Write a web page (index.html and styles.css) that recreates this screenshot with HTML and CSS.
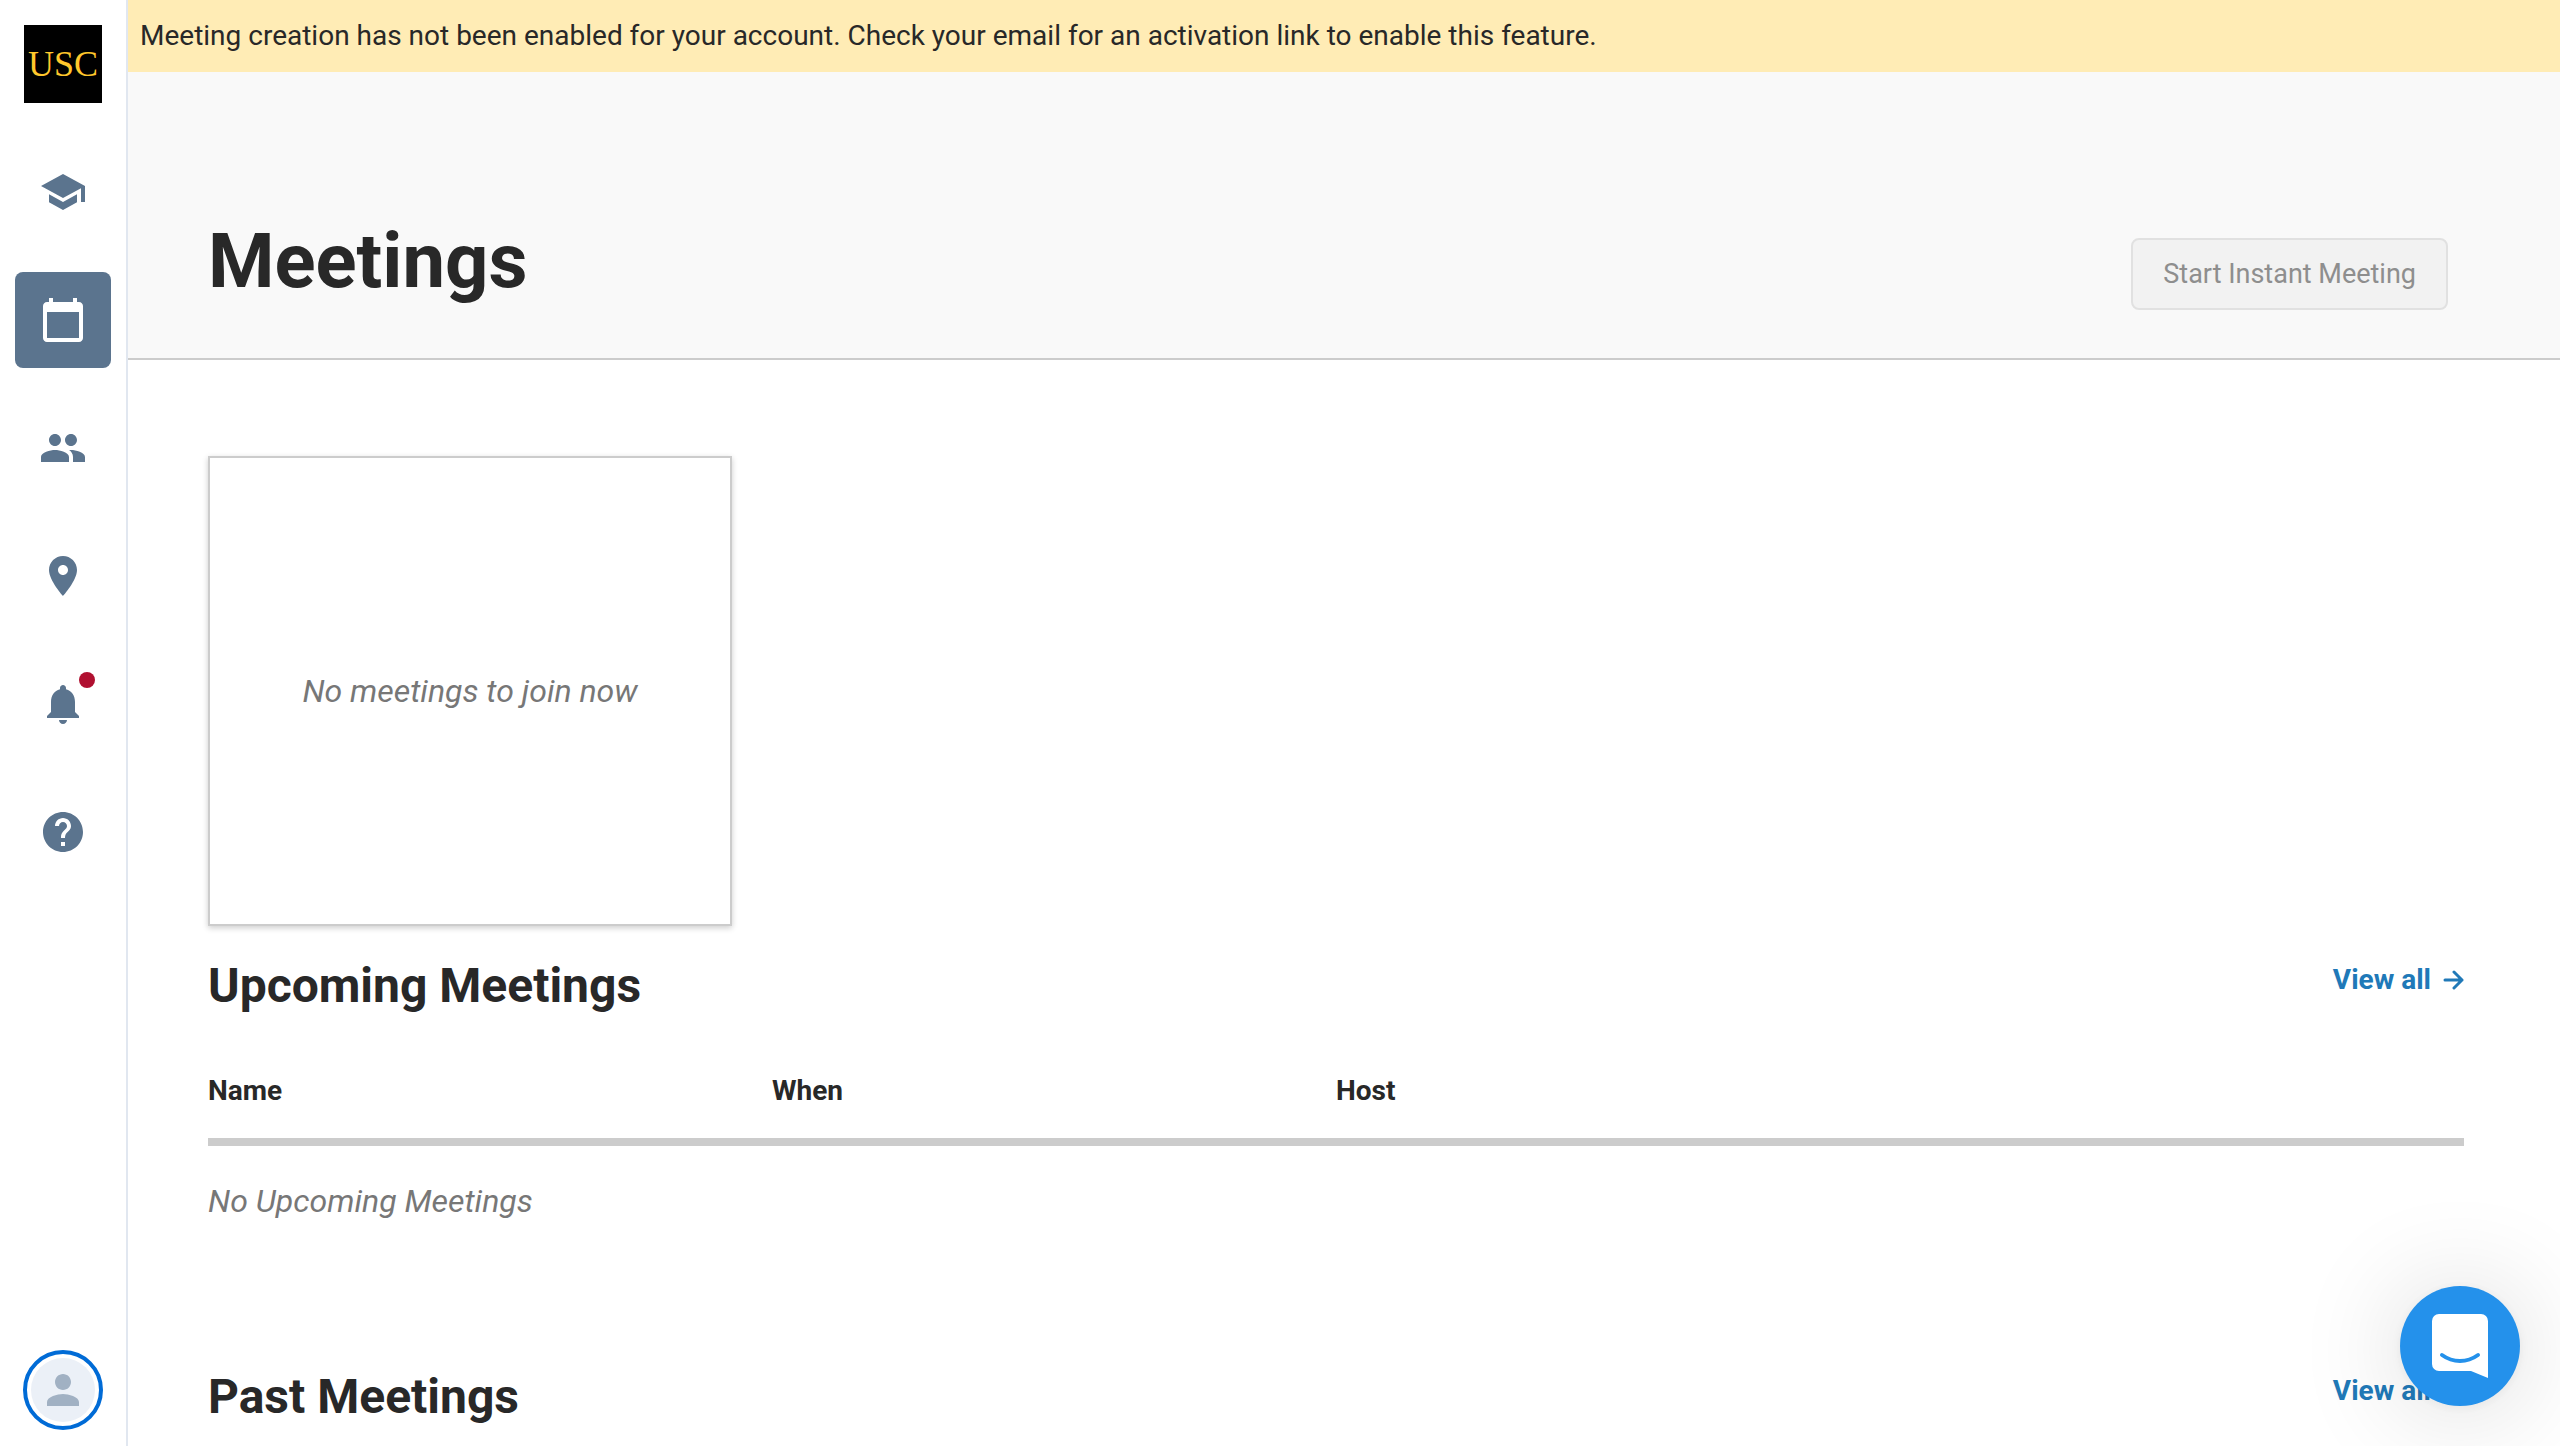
FILE: index.html
```html
<!DOCTYPE html>
<html lang="en">
<head>
<meta charset="utf-8">
<meta name="viewport" content="width=device-width, initial-scale=1">
<title>Meetings</title>
<link rel="stylesheet" href="styles.css">
</head>
<body>
<div class="app">
  <aside class="sidebar">
    <a class="logo" href="#">USC</a>
    <nav class="nav" aria-label="Main">
      <a class="nav-item" href="#" aria-label="Courses">
        <svg class="icon" viewBox="0 0 24 24" aria-hidden="true"><path d="M5 13.18v4L12 21l7-3.82v-4L12 17l-7-3.82zM12 3L1 9l11 6 9-4.91V17h2V9L12 3z"/></svg>
      </a>
      <a class="nav-item nav-item--active" href="#" aria-label="Meetings" aria-current="page">
        <svg class="icon" viewBox="0 0 24 24" aria-hidden="true"><path d="M20 3h-1V1h-2v2H7V1H5v2H4c-1.1 0-2 .9-2 2v16c0 1.1.9 2 2 2h16c1.1 0 2-.9 2-2V5c0-1.1-.9-2-2-2zm0 18H4V8h16v13z"/></svg>
      </a>
      <a class="nav-item" href="#" aria-label="People">
        <svg class="icon" viewBox="0 0 24 24" aria-hidden="true"><path d="M16 11c1.66 0 2.99-1.34 2.99-3S17.66 5 16 5c-1.66 0-3 1.34-3 3s1.34 3 3 3zm-8 0c1.66 0 2.99-1.34 2.99-3S9.66 5 8 5C6.34 5 5 6.34 5 8s1.34 3 3 3zm0 2c-2.33 0-7 1.17-7 3.5V19h14v-2.500c0-2.330-4.670-3.500-7-3.500zm8 0c-.29 0-.62.02-.97.05 1.160.84 1.970 1.970 1.970 3.450V19h6v-2.500c0-2.330-4.670-3.500-7-3.500z"/></svg>
      </a>
      <a class="nav-item" href="#" aria-label="Places">
        <svg class="icon" viewBox="0 0 24 24" aria-hidden="true"><path d="M12 2C8.130 2 5 5.130 5 9c0 5.250 7 13 7 13s7-7.750 7-13c0-3.870-3.130-7-7-7zm0 9.500c-1.380 0-2.500-1.120-2.500-2.500s1.120-2.500 2.500-2.500 2.500 1.120 2.500 2.500-1.120 2.500-2.500 2.500z"/></svg>
      </a>
      <a class="nav-item" href="#" aria-label="Notifications">
        <svg class="icon" viewBox="0 0 24 24" aria-hidden="true"><path d="M12 22c1.100 0 2-.9 2-2h-4c0 1.100.89 2 2 2zm6-6v-5c0-3.070-1.640-5.640-4.500-6.320V4c0-.83-.67-1.500-1.500-1.500s-1.500.67-1.500 1.500v.68C7.630 5.360 6 7.920 6 11v5l-2 2v1h16v-1l-2-2z"/></svg>
        <span class="nav-dot"></span>
      </a>
      <a class="nav-item" href="#" aria-label="Help">
        <svg class="icon" viewBox="0 0 24 24" aria-hidden="true"><path d="M12 2C6.480 2 2 6.480 2 12s4.480 10 10 10 10-4.480 10-10S17.520 2 12 2zm1 17h-2v-2h2v2zm2.070-7.750l-.9.92C13.450 12.900 13 13.500 13 15h-2v-.5c0-1.100.45-2.100 1.170-2.830l1.240-1.260c.37-.36.59-.86.59-1.410 0-1.100-.9-2-2-2s-2 .9-2 2H8c0-2.210 1.790-4 4-4s4 1.790 4 4c0 .88-.36 1.680-.93 2.250z"/></svg>
      </a>
    </nav>
    <button class="avatar" type="button" aria-label="Account">
      <span class="avatar-face">
        <svg class="icon" viewBox="0 0 24 24" aria-hidden="true"><path d="M12 12c2.210 0 4-1.790 4-4s-1.790-4-4-4-4 1.790-4 4 1.790 4 4 4zm0 2c-2.670 0-8 1.340-8 4v2h16v-2c0-2.660-5.330-4-8-4z"/></svg>
      </span>
    </button>
  </aside>

  <main class="main">
    <p class="banner">Meeting creation has not been enabled for your account. Check your email for an activation link to enable this feature.</p>
    <header class="page-header">
      <h1 class="page-title">Meetings</h1>
      <button class="start-button" type="button" disabled>Start Instant Meeting</button>
    </header>

    <div class="content">
      <section class="join-card">
        <p class="empty-text">No meetings to join now</p>
      </section>

      <section class="section">
        <div class="section-head">
          <h2 class="section-title">Upcoming Meetings</h2>
          <a class="view-all" href="#">View all
            <svg class="arrow" viewBox="0 0 21 20" aria-hidden="true"><path d="M2 10h17M11 2l8 8-8 8"/></svg>
          </a>
        </div>
        <table class="meetings">
          <thead>
            <tr><th scope="col">Name</th><th scope="col">When</th><th scope="col">Host</th><td></td></tr>
          </thead>
          <tbody>
            <tr><td class="empty-text" colspan="4">No Upcoming Meetings</td></tr>
          </tbody>
        </table>
      </section>

      <section class="section section--past">
        <div class="section-head">
          <h2 class="section-title">Past Meetings</h2>
          <a class="view-all" href="#">View all
            <svg class="arrow" viewBox="0 0 21 20" aria-hidden="true"><path d="M2 10h17M11 2l8 8-8 8"/></svg>
          </a>
        </div>
      </section>
    </div>
  </main>

  <button class="launcher" type="button" aria-label="Open chat">
    <svg class="launcher-icon" viewBox="0 0 56 64" aria-hidden="true">
      <path fill="#fff" d="M7 0h42a7 7 0 0 1 7 7v57l-17-7H7a7 7 0 0 1-7-7V7a7 7 0 0 1 7-7z"/>
      <path fill="none" stroke="#2491eb" stroke-width="4" stroke-linecap="round" d="M10 41c11 8 25 8 36 0"/>
    </svg>
  </button>
</div>
</body>
</html>
```
FILE: styles.css
```css
* {
  box-sizing: border-box;
}

body {
  margin: 0;
  background: #fff;
  color: #282828;
  font-family: Roboto, "Liberation Sans", sans-serif;
  font-size: 28px;
  line-height: 34px;
}

h1,
h2,
p {
  margin: 0;
}

a {
  text-decoration: none;
}

button {
  font-family: inherit;
}

.app {
  display: flex;
  height: 100vh;
}

/* Sidebar */
.sidebar {
  flex: none;
  display: flex;
  flex-direction: column;
  align-items: center;
  width: 128px;
  padding: 25px 0 16px;
  border-right: 2px solid #e1e7f0;
}

.logo {
  display: flex;
  align-items: center;
  justify-content: center;
  width: 78px;
  height: 78px;
  background: #000;
  color: #ffc72c;
  font-family: "Liberation Serif", serif;
  font-size: 36px;
}

.nav {
  display: flex;
  flex-direction: column;
  gap: 32px;
  margin: 41px 0 auto;
}

.nav-item {
  position: relative;
  display: flex;
  align-items: center;
  justify-content: center;
  width: 96px;
  height: 96px;
  border-radius: 8px;
  color: #5b748e;
}

.nav-item--active {
  background: #5b748e;
  color: #fff;
}

.icon {
  width: 48px;
  height: 48px;
  fill: currentColor;
}

.nav-dot {
  position: absolute;
  top: 16px;
  right: 16px;
  width: 16px;
  height: 16px;
  border-radius: 50%;
  background: #b01030;
}

.avatar {
  width: 80px;
  height: 80px;
  padding: 4px;
  border: 4px solid #006bd6;
  border-radius: 50%;
  background: #fff;
}

.avatar-face {
  display: flex;
  align-items: center;
  justify-content: center;
  height: 64px;
  border-radius: 50%;
  background: #ebf0f7;
  color: #a1b1c3;
}

/* Page */
.main {
  flex: 1;
  min-width: 0;
  overflow-y: auto;
  scrollbar-width: none;
}

.banner {
  padding: 19px 12px;
  background: #ffecb5;
}

.page-header {
  display: flex;
  align-items: flex-end;
  justify-content: space-between;
  padding: 140px 112px 48px 80px;
  border-bottom: 2px solid #ccc;
  background: #f9f9f9;
}

.page-title {
  font-size: 76px;
  line-height: 98px;
}

.start-button {
  padding: 17px 30px;
  border: 2px solid #e1e1e1;
  border-radius: 8px;
  background: #f2f2f2;
  color: #8e8e8e;
  font-size: 27px;
  line-height: 34px;
}

.content {
  padding: 96px 96px 0 80px;
}

.join-card {
  display: flex;
  align-items: center;
  justify-content: center;
  width: 524px;
  height: 470px;
  border: 2px solid #ccc;
  box-shadow: 0 2px 6px rgba(0, 0, 0, 0.2);
}

.empty-text {
  color: #777;
  font-size: 32px;
  font-style: italic;
  line-height: 40px;
}

.section {
  margin-top: 31px;
}

.section--past {
  margin-top: 112px;
}

.section-head {
  display: flex;
  align-items: flex-start;
  justify-content: space-between;
}

.section-title {
  font-size: 48px;
  line-height: 58px;
}

.view-all {
  display: flex;
  align-items: center;
  gap: 12px;
  color: #2079b8;
  font-weight: 700;
  line-height: 46px;
}

.arrow {
  width: 21px;
  height: 20px;
  fill: none;
  stroke: currentColor;
  stroke-width: 3;
  stroke-linecap: round;
  stroke-linejoin: round;
}

.meetings {
  width: 100%;
  margin-top: 27px;
  border-spacing: 0;
  table-layout: fixed;
}

.meetings th,
.meetings thead td {
  padding: 32px 0 30px;
  border-bottom: 8px solid #ccc;
  text-align: left;
}

.meetings tbody td {
  padding: 35px 0;
}

/* Chat launcher floats over the page */
.launcher {
  position: fixed;
  right: 40px;
  bottom: 40px;
  display: flex;
  align-items: center;
  justify-content: center;
  width: 120px;
  height: 120px;
  padding: 0;
  border: 0;
  border-radius: 50%;
  background: #2491eb;
  box-shadow: 0 2px 12px rgba(0, 0, 0, 0.06), 0 4px 110px rgba(0, 0, 0, 0.16);
}

.launcher-icon {
  width: 56px;
  height: 64px;
}
```
